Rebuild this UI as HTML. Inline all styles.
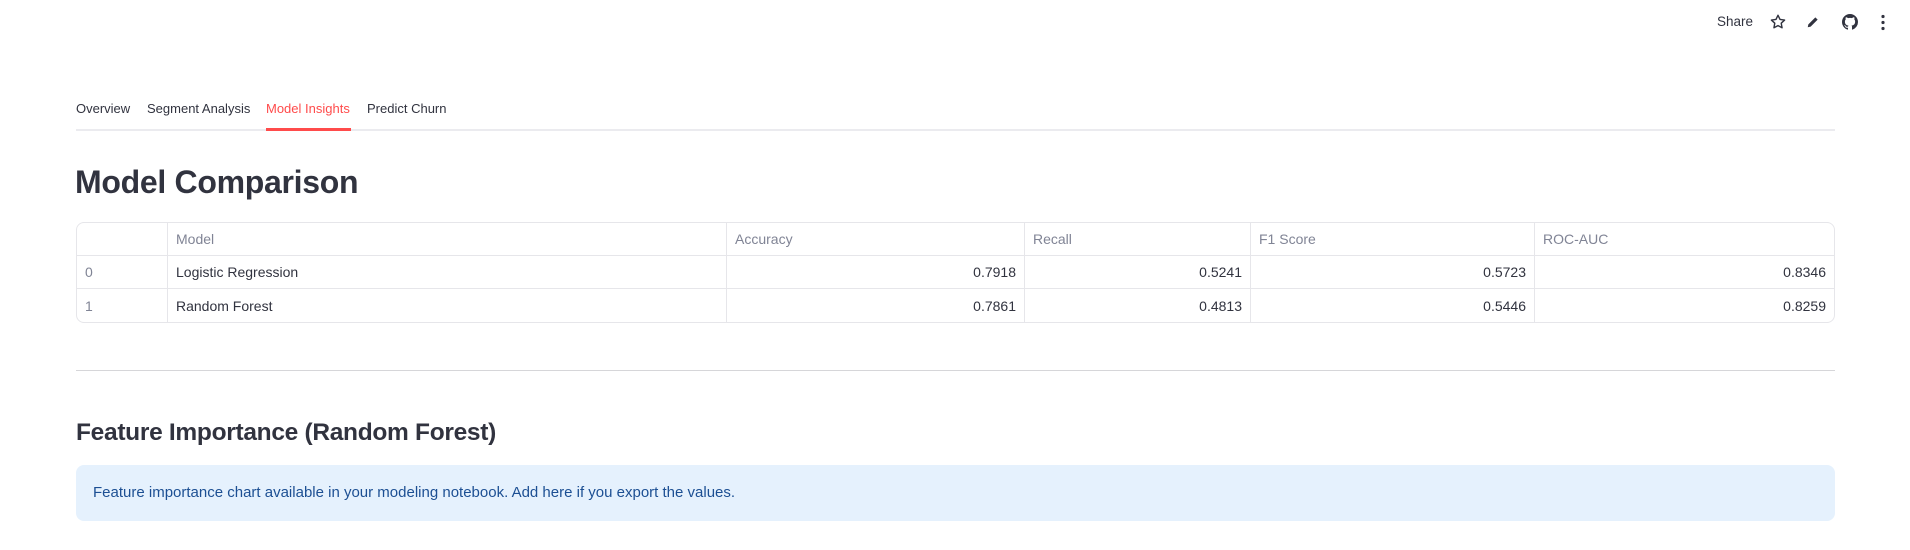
<!DOCTYPE html>
<html><head><meta charset="utf-8"><style>
*{margin:0;padding:0;box-sizing:border-box}
body{width:1910px;height:550px;background:#fff;font-family:"Liberation Sans",sans-serif;color:#31333f;position:relative;overflow:hidden}
.abs{position:absolute;white-space:nowrap}
.tab{position:absolute;top:101px;font-size:13px;color:#31333f}
table{position:absolute;left:76px;top:222px;width:1759px;border-collapse:separate;border-spacing:0;border:1px solid #e6e6ea;border-radius:8px;font-size:14px}
td{height:33px;border-right:1px solid #e6e6ea;border-bottom:1px solid #e6e6ea;padding:0 8px;color:#31333f}
tr:last-child td{border-bottom:none}
td:last-child{border-right:none}
.h td{color:#808495}
.n{text-align:right}
.i{color:#808495}
</style></head><body>
<div class="abs" style="left:1717px;top:14px;font-size:13.5px;color:#31333f">Share</div>
<svg class="abs" style="left:1769px;top:13px" width="18" height="18" viewBox="0 0 24 24"><path d="M12 3l2.7 5.6 6.1.8-4.5 4.2 1.1 6.1L12 16.8l-5.4 2.9 1.1-6.1L3.2 9.4l6.1-.8z" fill="none" stroke="#31333f" stroke-width="1.9" stroke-linejoin="round"/></svg>
<svg class="abs" style="left:1806px;top:15px" width="14" height="14" viewBox="0 0 24 24"><path d="M3 21l1-5L16 4l4 4L8 20z" fill="#31333f"/></svg>
<svg class="abs" style="left:1842px;top:14px" width="16" height="16" viewBox="0 0 16 16"><path fill="#31333f" d="M8 0C3.580 0 0 3.58 0 8c0 3.54 2.29 6.53 5.47 7.590.4.07.55-.17.55-.38 0-.19-.01-.82-.01-1.49-2.01.37-2.530-.49-2.69-.94-.09-.23-.48-.94-.82-1.13-.28-.15-.68-.52-.01-.53.63-.01 1.08.58 1.23.82.72 1.21 1.87.87 2.33.66.07-.52.28-.87.51-1.07-1.78-.2-3.64-.89-3.64-3.95 0-.87.31-1.59.82-2.15-.08-.2-.36-1.02.08-2.12 0 0 .67-.21 2.2.82.64-.18 1.32-.27 2-.27.68 0 1.36.09 2 .27 1.53-1.04 2.2-.82 2.2-.82.44 1.1.16 1.92.08 2.12.51.56.82 1.27.82 2.15 0 3.07-1.87 3.75-3.65 3.95.29.25.54.73.54 1.48 0 1.07-.01 1.93-.01 2.2 0 .21.15.46.55.38A8.013 8.013 0 0016 8c0-4.42-3.58-8-8-8z"/></svg>
<svg class="abs" style="left:1880px;top:14px" width="6" height="17" viewBox="0 0 6 17"><circle cx="3" cy="2.5" r="1.6" fill="#31333f"/><circle cx="3" cy="8.5" r="1.6" fill="#31333f"/><circle cx="3" cy="14.5" r="1.6" fill="#31333f"/></svg>

<div class="tab" style="left:76px">Overview</div>
<div class="tab" style="left:147px">Segment Analysis</div>
<div class="tab" style="left:266px;color:#ff4b4b">Model Insights</div>
<div class="tab" style="left:367px">Predict Churn</div>
<div class="abs" style="left:76px;top:129px;width:1759px;height:2px;background:#ebebef"></div>
<div class="abs" style="left:266px;top:128px;width:85px;height:3px;background:#ff4b4b"></div>

<div class="abs" style="left:75px;top:164px;font-size:32px;font-weight:bold;letter-spacing:-0.3px">Model Comparison</div>

<table>
<colgroup><col style="width:91px"><col style="width:559px"><col style="width:298px"><col style="width:226px"><col style="width:284px"><col></colgroup>
<tr class="h"><td></td><td>Model</td><td>Accuracy</td><td>Recall</td><td>F1 Score</td><td>ROC-AUC</td></tr>
<tr><td class="i">0</td><td>Logistic Regression</td><td class="n">0.7918</td><td class="n">0.5241</td><td class="n">0.5723</td><td class="n">0.8346</td></tr>
<tr><td class="i">1</td><td>Random Forest</td><td class="n">0.7861</td><td class="n">0.4813</td><td class="n">0.5446</td><td class="n">0.8259</td></tr>
</table>

<div class="abs" style="left:76px;top:370px;width:1759px;height:1px;background:#d6d6d9"></div>

<div class="abs" style="left:76px;top:419px;font-size:24.5px;font-weight:bold;letter-spacing:-0.3px">Feature Importance (Random Forest)</div>

<div class="abs" style="left:76px;top:465px;width:1759px;height:56px;background:#e5f1fd;border-radius:8px"></div>
<div class="abs" style="left:93px;top:484px;font-size:15px;color:#1c4f93">Feature importance chart available in your modeling notebook. Add here if you export the values.</div>
</body></html>
